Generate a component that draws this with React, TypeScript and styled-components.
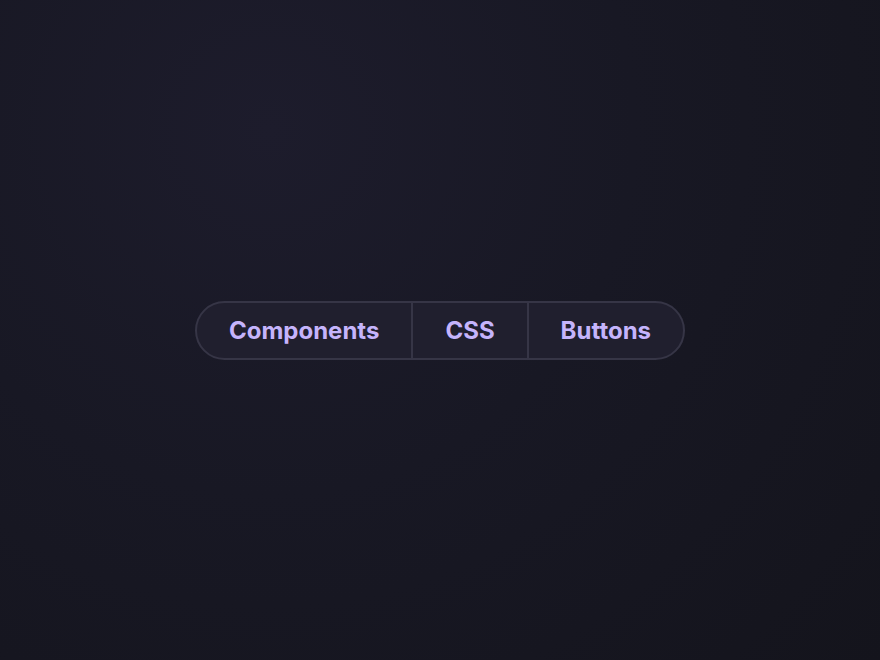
import React from "react";
import styled, { createGlobalStyle } from "styled-components";

const Global = createGlobalStyle`
  html, body { margin: 0; padding: 0; height: 100%; }
  body { background: #14141c; font-family: Inter, "Noto Sans", sans-serif; }
  #root { height: 100%; }
`;

const Page = styled.div`
  width: 880px;
  height: 660px;
  display: flex;
  align-items: center;
  justify-content: center;
  background: radial-gradient(circle at 270px 130px, #1d1c2c 0%, #181824 45%, #14141c 100%);
`;

const Group = styled.div`
  display: flex;
  align-items: stretch;
  border: 2px solid #363546;
  border-radius: 999px;
  background: #201f2e;
  overflow: hidden;
`;

const Segment = styled.button<{ $first?: boolean }>`
  appearance: none;
  background: transparent;
  border: none;
  border-left: ${(p) => (p.$first ? "none" : "2px solid #363546")};
  padding: 0 32px;
  height: 55px;
  font-family: Inter, "Noto Sans", sans-serif;
  font-weight: 700;
  font-size: 24px;
  color: #c5b4fc;
  cursor: pointer;
`;

export default function App() {
  return (
    <>
      <Global />
      <Page>
        <Group>
          <Segment $first>Components</Segment>
          <Segment>CSS</Segment>
          <Segment>Buttons</Segment>
        </Group>
      </Page>
    </>
  );
}
